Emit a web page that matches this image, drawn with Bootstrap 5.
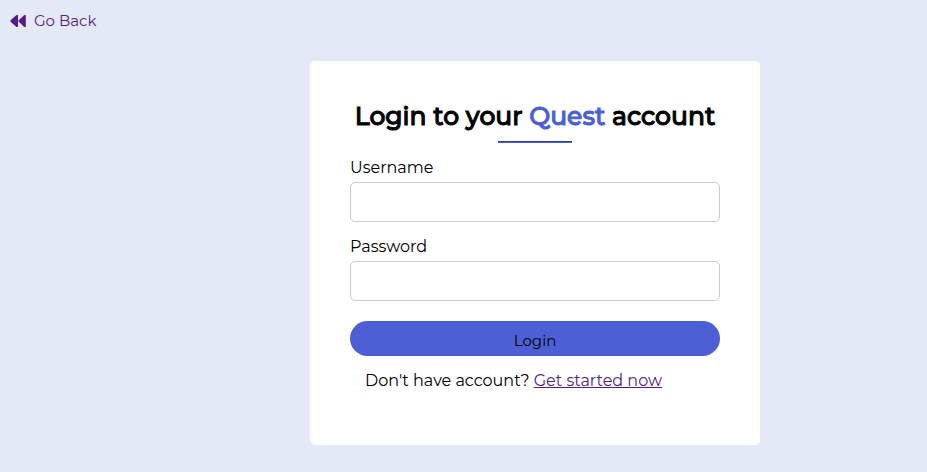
<!DOCTYPE html>
<html lang="en">
<head>
<meta charset="utf-8">
<meta name="viewport" content="width=device-width, initial-scale=1">
<title>Login</title>
<link href="https://cdn.jsdelivr.net/npm/bootstrap@5.3.0/dist/css/bootstrap.min.css" rel="stylesheet">
<style>
body { background: #e3e9f7; color: #000; font-family: Montserrat, Inter, sans-serif; font-size: 16px; line-height: 20px; }
a, a:hover { color: #551a8b; }
.back-link { font-size: 15px; padding: 11px 10px 10px; gap: 8px; }
.login-layout { display: grid; grid-template-columns: 65fr minmax(0, 450px) 35fr; padding-top: 20px; }
.login-card { grid-column: 2; border-radius: 5px; padding: 40px 40px 54px; }
.login-title { font-size: 25px; line-height: 30px; font-weight: 500; -webkit-text-stroke: 1px currentColor; }
.brand { color: #4c5fd5; }
.title-rule { width: 20%; height: 2px; margin: 10px auto 15px; background: #4c5fd5; border-top: 1px solid #2e3da8; }
.login-card .form-label { margin-bottom: 4px; }
.login-card .form-control { height: 40px; margin-bottom: 15px; border: 1px solid #ccc; border-radius: 5px; }
.login-card .btn { margin-top: 20px; background: #4c5fd5; color: #000; font-size: 15px; line-height: 20px; padding: 10px 12px 5px; border: 0; }
.signup-note { margin: 15px 15px 0; }
</style>
<script src="https://cdn.jsdelivr.net/npm/bootstrap@5.3.0/dist/js/bootstrap.bundle.min.js"></script>
</head>
<body>
<nav class="d-flex">
  <a class="back-link d-flex align-items-center text-decoration-none" href="#">
    <svg width="16" height="12" viewBox="0 0 16 12" fill="currentColor" aria-hidden="true"><path d="M.8 5.1 6.2.3Q8 -.8 8 1V11Q8 12.8 6.2 11.7L.8 6.9Q0 6 .8 5.1ZM9 5.1 14 .3Q15.8 -.8 15.8 1V11Q15.8 12.8 14 11.7L9 6.9Q8.2 6 9 5.1Z"/></svg>
    <span>Go Back</span>
  </a>
</nav>
<main class="login-layout">
  <section class="login-card bg-white">
    <h1 class="login-title text-center m-0">Login to your <span class="brand">Quest</span> account</h1>
    <div class="title-rule"></div>
    <form>
      <label class="form-label d-block" for="username">Username</label>
      <input class="form-control shadow-none" type="text" id="username">
      <label class="form-label d-block" for="password">Password</label>
      <input class="form-control shadow-none mb-0" type="password" id="password">
      <button class="btn rounded-pill w-100 d-block" type="submit">Login</button>
    </form>
    <p class="signup-note">Don't have account? <a href="#">Get started now</a></p>
  </section>
</main>
</body>
</html>
